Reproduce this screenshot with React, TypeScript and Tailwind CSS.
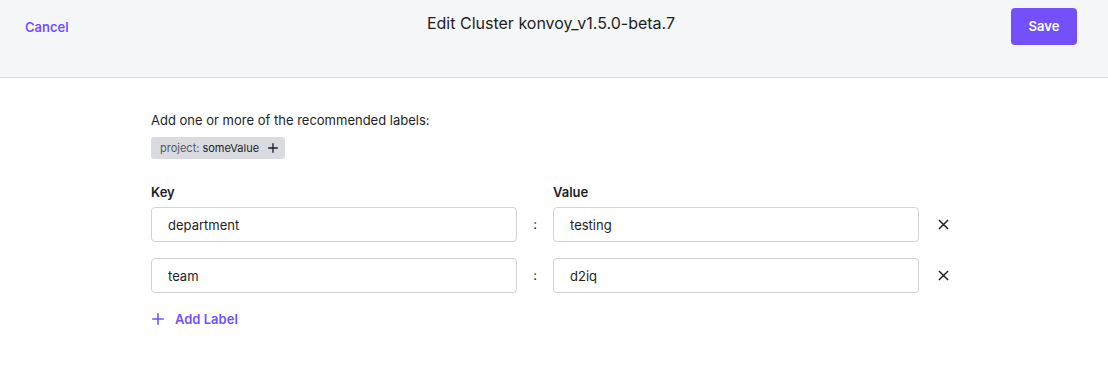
import { useState } from "react";

interface Label {
    key: string;
    value: string;
}

const PlusIcon = ({ className }: { className?: string }) => (
    <svg viewBox="0 0 12 12" className={className} fill="none" stroke="currentColor" strokeWidth={1.6} strokeLinecap="square">
        <path d="M6 1v10M1 6h10" />
    </svg>
);

const CloseIcon = () => (
    <svg viewBox="0 0 12 12" className="w-[11px] h-[11px]" fill="none" stroke="currentColor" strokeWidth={1.6}>
        <path d="M1 1l10 10M11 1L1 11" />
    </svg>
);

const App = () => {
    // labels shown in the form
    const [labels, setLabels] = useState<Label[]>([
        { key: "department", value: "testing" },
        { key: "team", value: "d2iq" },
    ]);

    const update = (i: number, field: keyof Label, v: string) => {
        setLabels((prev) => prev.map((l, idx) => (idx === i ? { ...l, [field]: v } : l)));
    };

    return (
        <div className="min-h-[373px] bg-white text-[#1d1e24]" style={{ fontFamily: "Inter, 'Liberation Sans', sans-serif" }}>
            <div className="h-[78px] bg-[#f5f6f8] border-b border-[#d7d9dd] grid grid-cols-[1fr_auto_1fr] items-start pl-[25px] pr-[31px]">
                <div>
                    <button className="mt-[17px] text-[13px] leading-5 font-semibold text-[#7450fb]">Cancel</button>
                </div>
                <h1 className="mt-[12px] text-[16px] leading-[22px] text-[#1d1e24]">Edit Cluster konvoy_v1.5.0-beta.7</h1>
                <div className="flex justify-end">
                    <button className="mt-[8px] w-[66px] h-[37px] rounded-[4px] bg-[#7450fb] text-white text-[13px] font-semibold">
                        Save
                    </button>
                </div>
            </div>

            <div className="w-[806px] mx-auto pt-[32px]">
                <p className="text-[13px] leading-5">Add one or more of the recommended labels:</p>
                <div className="mt-[7px] inline-flex items-center h-[22px] w-[134px] pl-[9px] rounded-[3px] bg-[#d9dbe0] text-[11px]">
                    <span className="text-[#55585f]">project:</span>
                    <span className="ml-[3px] text-[#1d1e24]">someValue</span>
                    <PlusIcon className="ml-[9px] w-[10px] h-[10px] text-[#1d1e24]" />
                </div>

                <div className="mt-[23px] grid grid-cols-[366px_36px_366px_38px] text-[13px] leading-5 font-semibold">
                    <span>Key</span>
                    <span></span>
                    <span>Value</span>
                    <span></span>
                </div>

                <div className="mt-[5px] grid gap-[16px]">
                    {labels.map((l, i) => (
                        <div key={i} className="grid grid-cols-[366px_36px_366px_38px] items-center">
                            <input
                                value={l.key}
                                onChange={(e) => update(i, "key", e.target.value)}
                                className="h-[35px] border border-[#d0d2d7] rounded-[4px] px-[16px] text-[13px] outline-none"
                            />
                            <span className="text-center text-[13px]">:</span>
                            <input
                                value={l.value}
                                onChange={(e) => update(i, "value", e.target.value)}
                                className="h-[35px] border border-[#d0d2d7] rounded-[4px] px-[16px] text-[13px] outline-none"
                            />
                            <button
                                onClick={() => setLabels((prev) => prev.filter((_, idx) => idx !== i))}
                                className="pl-[19px] flex items-center text-[#1d1e24]"
                            >
                                <CloseIcon />
                            </button>
                        </div>
                    ))}
                </div>

                <button
                    onClick={() => setLabels((prev) => [...prev, { key: "", value: "" }])}
                    className="mt-[16px] flex items-center text-[13px] leading-5 font-semibold text-[#7450fb]"
                >
                    <PlusIcon className="ml-[1px] w-[12px] h-[12px]" />
                    <span className="ml-[11px]">Add Label</span>
                </button>
            </div>
        </div>
    );
};

export default App;
